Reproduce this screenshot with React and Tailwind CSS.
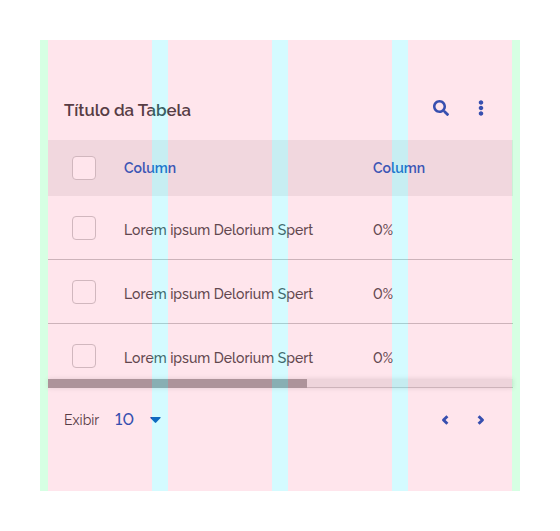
import { FaSearch, FaEllipsisV } from "react-icons/fa";

const rows = [1, 2, 3];

function Checkbox() {
  return <span className="block h-6 w-6 rounded-[4px] border border-[#ccc] bg-white" />;
}

function Chevron({ className, points }) {
  return (
    <svg viewBox="0 0 8 10" className={`h-[10px] w-2 ${className}`} fill="none" stroke="#2158bc" strokeWidth="2.9" strokeLinejoin="round">
      <polyline points={points} />
    </svg>
  );
}

function GridOverlay() {
  return (
    <div className="pointer-events-none absolute inset-0 flex">
      <div className="w-2 bg-[#00ff4d]/16" />
      <div className="w-[104px] bg-[#ff0048]/10" />
      <div className="w-4 bg-[#00e6ff]/17" />
      <div className="w-[104px] bg-[#ff0048]/10" />
      <div className="w-4 bg-[#00e6ff]/17" />
      <div className="w-[104px] bg-[#ff0048]/10" />
      <div className="w-4 bg-[#00e6ff]/17" />
      <div className="w-[104px] bg-[#ff0048]/10" />
      <div className="w-2 bg-[#00ff4d]/16" />
    </div>
  );
}

export default function App() {
  return (
    <div className="h-[531px] w-[560px] bg-white p-10 font-['Raleway','Lato',sans-serif] text-[#444] lining-nums antialiased">
      <div className="relative h-[451px] w-[480px]">
        <div className="flex h-full w-[473px] flex-col pl-2 pt-9">
          <header className="flex h-16 items-center pl-4 pr-6">
            <h1 className="flex-1 pt-1 text-[16.8px] leading-6 font-semibold">Título da Tabela</h1>
            <FaSearch className="mr-6 h-4 w-4 text-[#2158bc]" />
            <FaEllipsisV className="h-4 w-4 text-[#2158bc]" />
          </header>

          <div className="relative">
            <div className="flex h-14 items-center bg-[#f0f0f0] pl-6 text-[14px] font-semibold text-[#2560c2]">
              <Checkbox />
              <span className="ml-7 w-[249px]">Column</span>
              <span>Column</span>
            </div>
            {rows.map((row) => (
              <div key={row} className="flex h-16 items-center border-b border-[#c8c8c8] pl-6 text-[14px] font-medium text-[#505050]">
                <Checkbox />
                <span className="ml-7 w-[249px] pt-[5px]">Lorem ipsum Delorium Spert</span>
                <span className="pt-[5px]">0%</span>
              </div>
            ))}
            <div className="absolute bottom-0 left-0 h-[9px] w-full border-b border-[#c8c8c8] bg-[#ededed] shadow-[0_0_5px_rgba(0,0,0,0.12)]">
              <div className="h-[9px] w-[259px] bg-[#a4a4a4]" />
            </div>
          </div>

          <footer className="flex h-16 items-center pl-4 pr-[28px]">
            <span className="w-[51px] text-[14px]">Exibir</span>
            <span className="w-[35px] text-[16.8px] font-medium text-[#2158bc]">10</span>
            <svg viewBox="0 0 11 6" className="h-[6px] w-[11px]" fill="#1351b4">
              <path d="M.8 0h9.4q.8.2.3.9L6.2 5.6q-.7.6-1.4 0L.4.9Q0 .2.8 0Z" />
            </svg>
            <Chevron className="ml-auto" points="6.4,1.2 2.5,5 6.4,8.8" />
            <Chevron className="ml-7" points="1.6,1.2 5.5,5 1.6,8.8" />
          </footer>
        </div>
        <GridOverlay />
      </div>
    </div>
  );
}
